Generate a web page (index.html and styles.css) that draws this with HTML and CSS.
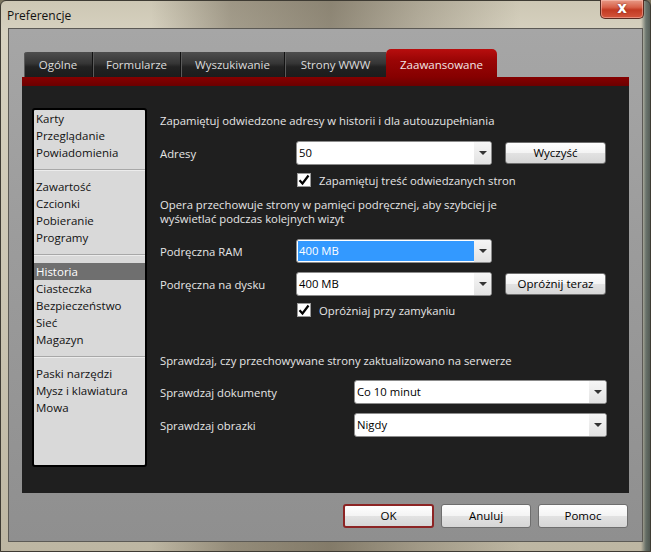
FILE: index.html
```html
<!DOCTYPE html>
<html lang="pl">
<head>
<meta charset="utf-8">
<title>Preferencje</title>
<link rel="stylesheet" href="styles.css">
</head>
<body>
<div class="window">
  <div class="titlebar">
    <div class="title">Preferencje</div>
    <div class="close"><span class="close-x">x</span></div>
  </div>
  <div class="client">
    <div class="tabs">
      <div class="tab t1">Ogólne</div>
      <div class="tab t2">Formularze</div>
      <div class="tab t3">Wyszukiwanie</div>
      <div class="tab t4">Strony WWW</div>
      <div class="tab t5 active">Zaawansowane</div>
    </div>
    <div class="redbar"></div>
    <div class="panel">
      <div class="sidebar">
        <div class="group">
          <div class="item">Karty</div>
          <div class="item">Przeglądanie</div>
          <div class="item">Powiadomienia</div>
        </div>
        <div class="sep"></div>
        <div class="group">
          <div class="item">Zawartość</div>
          <div class="item">Czcionki</div>
          <div class="item">Pobieranie</div>
          <div class="item">Programy</div>
        </div>
        <div class="sep"></div>
        <div class="group">
          <div class="item selected">Historia</div>
          <div class="item">Ciasteczka</div>
          <div class="item">Bezpieczeństwo</div>
          <div class="item">Sieć</div>
          <div class="item">Magazyn</div>
        </div>
        <div class="sep"></div>
        <div class="group">
          <div class="item">Paski narzędzi</div>
          <div class="item">Mysz i klawiatura</div>
          <div class="item">Mowa</div>
        </div>
      </div>
      <div class="content">
        <div class="heading h1">Zapamiętuj odwiedzone adresy w historii i dla autouzupełniania</div>
        <div class="row r-addr">
          <div class="label">Adresy</div>
          <div class="combo"><div class="val">50</div><div class="arrow"><span class="tri"></span></div></div>
          <div class="btn side">Wyczyść</div>
        </div>
        <div class="check r-chk1">
          <svg class="cb" width="14" height="14" viewBox="0 0 14 14"><rect x="0.5" y="0.5" width="13" height="13" fill="#fff" stroke="#9a9a9a"/><path d="M2.5 7.2 L5.5 10.5 L11.5 2.5" fill="none" stroke="#000" stroke-width="2.2"/></svg>
          <span>Zapamiętuj treść odwiedzanych stron</span>
        </div>
        <div class="para">Opera przechowuje strony w pamięci podręcznej, aby szybciej je<br>wyświetlać podczas kolejnych wizyt</div>
        <div class="row r-ram">
          <div class="label">Podręczna RAM</div>
          <div class="combo"><div class="val sel">400 MB</div><div class="arrow"><span class="tri"></span></div></div>
        </div>
        <div class="row r-disk">
          <div class="label">Podręczna na dysku</div>
          <div class="combo"><div class="val">400 MB</div><div class="arrow"><span class="tri"></span></div></div>
          <div class="btn side">Opróżnij teraz</div>
        </div>
        <div class="check r-chk2">
          <svg class="cb" width="14" height="14" viewBox="0 0 14 14"><rect x="0.5" y="0.5" width="13" height="13" fill="#fff" stroke="#9a9a9a"/><path d="M2.5 7.2 L5.5 10.5 L11.5 2.5" fill="none" stroke="#000" stroke-width="2.2"/></svg>
          <span>Opróżniaj przy zamykaniu</span>
        </div>
        <div class="heading h2">Sprawdzaj, czy przechowywane strony zaktualizowano na serwerze</div>
        <div class="row r-docs">
          <div class="label wide">Sprawdzaj dokumenty</div>
          <div class="combo long"><div class="val">Co 10 minut</div><div class="arrow"><span class="tri"></span></div></div>
        </div>
        <div class="row r-img">
          <div class="label wide">Sprawdzaj obrazki</div>
          <div class="combo long"><div class="val">Nigdy</div><div class="arrow"><span class="tri"></span></div></div>
        </div>
      </div>
    </div>
    <div class="footer">
      <div class="btn foot ok">OK</div>
      <div class="btn foot">Anuluj</div>
      <div class="btn foot">Pomoc</div>
    </div>
  </div>
</div>
</body>
</html>
```
FILE: styles.css
```css
* { box-sizing: border-box; }
html, body { margin: 0; padding: 0; }
body {
  width: 651px;
  height: 552px;
  overflow: hidden;
  font-family: "Open Sans", "Noto Sans", sans-serif;
  font-size: 11px;
  background: #7a745f;
}
.window {
  width: 651px;
  height: 552px;
  display: flex;
  flex-direction: column;
  border: 1px solid #3e3b33;
  border-radius: 6px 6px 0 0;
  background:
    linear-gradient(to right, rgba(0,0,0,0) 0, rgba(0,0,0,0) 640px, rgba(40,60,60,0.6) 645px, rgba(20,30,30,0.7) 651px),
    linear-gradient(to right, rgba(0,0,0,0) 0, rgba(0,0,0,0) 150px, rgba(70,60,45,0.35) 230px, rgba(60,50,35,0.45) 330px, rgba(80,70,55,0.25) 420px, rgba(0,0,0,0) 520px),
    linear-gradient(#cdc7b4 0, #d6d1bf 30px, #c9c3b0 60%, #bdb6a2 100%);
}
.titlebar {
  height: 27px;
  display: flex;
  align-items: flex-start;
  padding-left: 6px;
}
.title {
  font-size: 12px;
  line-height: 29px;
  color: #111;
}
.close {
  margin-left: auto;
  margin-right: 6px;
  width: 44px;
  height: 19px;
  margin-top: -1px;
  border: 1px solid #5b2a20;
  border-top: none;
  border-radius: 0 0 5px 5px;
  background: linear-gradient(#e89a86 0, #d8624a 40%, #c23a22 55%, #d4553c 100%);
  box-shadow: inset 0 0 0 1px rgba(255,210,200,0.45);
  display: flex;
  align-items: center;
  justify-content: center;
}
.close-x {
  color: #fff;
  font-family: "DejaVu Sans", sans-serif;
  font-weight: bold;
  font-size: 15px;
  line-height: 15px;
  margin-top: -2px;
  text-shadow: 0 0 2px #6a1a10;
}
.client {
  flex: 1;
  margin: 0 7px 9px 7px;
  border: 1px solid #5c5a55;
  background: linear-gradient(#a6a6a6 0, #9c9c9c 40%, #8f8f8f 100%);
  padding: 20px 13px 0 13px;
  display: flex;
  flex-direction: column;
}
.tabs {
  display: flex;
  align-items: flex-end;
  height: 28px;
  padding-left: 2px;
}
.tab {
  height: 25px;
  line-height: 25px;
  text-align: center;
  color: #dcdcdc;
  font-size: 11.5px;
  background: linear-gradient(#4e4e4e 0, #363636 45%, #222 60%, #1c1c1c 100%);
  border-right: 1px solid #121212;
  box-shadow: inset 1px 0 0 #5a5a5a;
}
.t1 { width: 69px; border-radius: 3px 0 0 0; }
.t2 { width: 88px; }
.t3 { width: 104px; }
.t4 { width: 101px; border-right: none; }
.t5 { width: 111px; }
.tab.active {
  height: 28px;
  padding-top: 3px;
  color: #f2e6e6;
  border: none;
  box-shadow: none;
  border-radius: 5px 5px 0 0;
  background: linear-gradient(#b80e0e 0, #9a0505 40%, #860000 100%);
}
.redbar {
  height: 9px;
  background: linear-gradient(#860000, #6c0000);
}
.panel {
  height: 407px;
  background: #1f1f1f;
  display: flex;
  align-items: flex-start;
  padding: 22px 0 0 10px;
  color: #e6e6e6;
}
.sidebar {
  width: 115px;
  height: 359px;
  background: #d9d9d9;
  border: 2px solid #000;
  border-radius: 3px;
  color: #111;
  font-size: 11.5px;
}
.item {
  height: 17px;
  line-height: 17px;
  padding-left: 2px;
  white-space: nowrap;
}
.item.selected {
  background: #6f6f6f;
  color: #fff;
}
.sep {
  height: 1px;
  margin: 8px 0;
  background: #a8a8a8;
  box-shadow: 0 1px 0 #ececec;
}
.content {
  margin-left: 13px;
  padding-top: 4px;
  display: flex;
  flex-direction: column;
  font-size: 11.3px;
}
.heading { line-height: 17px; white-space: nowrap; }
.row {
  display: flex;
  align-items: center;
  height: 24px;
}
.label { width: 136px; white-space: nowrap; }
.label.wide { width: 194px; }
.r-addr { margin-top: 12px; }
.r-chk1 { margin-top: 8px; }
.para { margin-top: 11px; line-height: 14px; }
.r-ram { margin-top: 13px; }
.r-disk { margin-top: 9px; }
.r-chk2 { margin-top: 7px; }
.h2 { margin-top: 35px; }
.r-docs { margin-top: 11px; }
.r-img { margin-top: 9px; }
.check {
  display: flex;
  align-items: center;
  height: 14px;
  padding-left: 137px;
  gap: 8px;
}
.cb { display: block; }
.combo {
  width: 196px;
  height: 24px;
  background: #fff;
  border: 1px solid #8c8c8c;
  border-radius: 3px;
  display: flex;
  color: #000;
  overflow: hidden;
}
.combo.long { width: 253px; }
.val {
  flex: 1;
  padding-left: 2px;
  line-height: 22px;
}
.val.sel {
  background: #3399ff;
  color: #fff;
  margin: 1px 0 1px 1px;
  padding-left: 1px;
  line-height: 20px;
}
.arrow {
  width: 17px;
  background: linear-gradient(#f6f6f6, #e2e2e2);
  display: flex;
  align-items: center;
  justify-content: center;
}
.tri {
  width: 0;
  height: 0;
  border-left: 4px solid transparent;
  border-right: 4px solid transparent;
  border-top: 4px solid #333;
}
.btn {
  height: 22px;
  line-height: 20px;
  text-align: center;
  color: #000;
  font-size: 11.5px;
  border: 1px solid #6e6e6e;
  border-radius: 3px;
  background: linear-gradient(#fefefe 0, #f4f4f4 48%, #e2e2e2 52%, #d6d6d6 100%);
}
.btn.side { width: 101px; margin-left: 13px; }
.footer {
  display: flex;
  justify-content: flex-end;
  gap: 7px;
  margin-top: 11px;
  padding-right: 1px;
}
.btn.foot { width: 90px; height: 24px; line-height: 22px; }
.btn.ok {
  width: 91px;
  border: 2px solid #8c2424;
  line-height: 20px;
}
```
